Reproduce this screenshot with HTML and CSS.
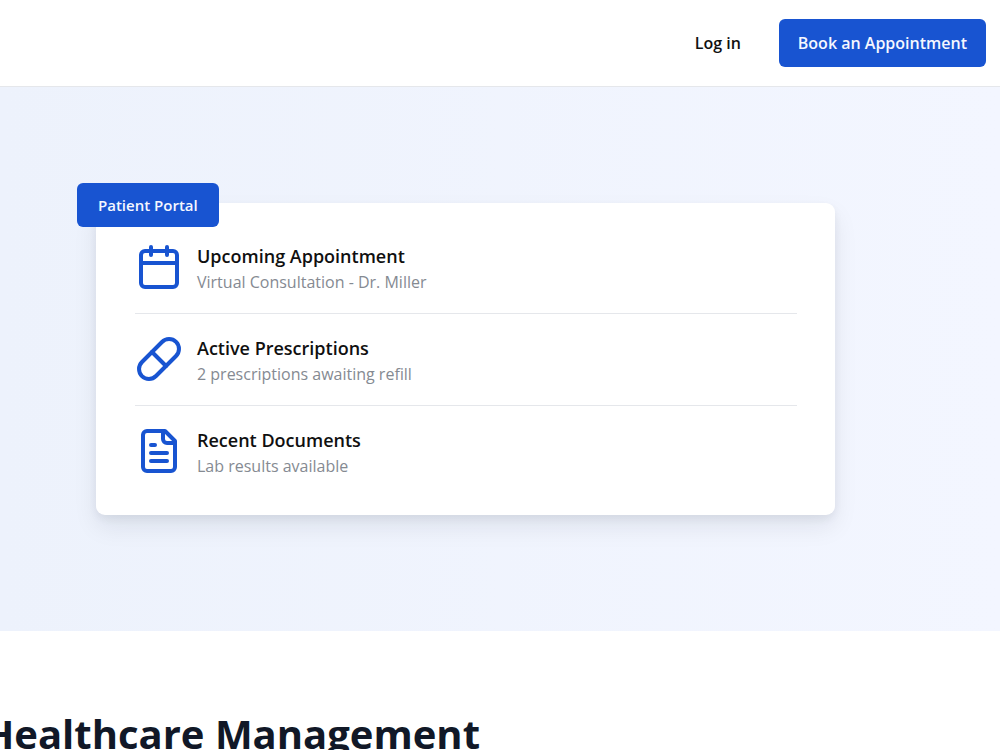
FILE: index.html
```html
<!DOCTYPE html>
<html lang="en">
<head>
<meta charset="utf-8">
<meta name="viewport" content="width=device-width, initial-scale=1">
<title>Patient Portal</title>
<link rel="stylesheet" href="styles.css">
</head>
<body>
<header class="header">
  <a class="login" href="#">Log in</a>
  <button class="book" type="button">Book an Appointment</button>
</header>
<main>
  <section class="hero">
    <div class="card">
      <span class="badge">Patient Portal</span>
      <ul class="list">
        <li class="item">
          <svg class="icon" viewBox="0 0 24 24" aria-hidden="true"><path d="M8 2v4M16 2v4M3 10h18"/><rect x="3" y="4" width="18" height="18" rx="2"/></svg>
          <div>
            <h3 class="title">Upcoming Appointment</h3>
            <p class="detail">Virtual Consultation - Dr. Miller</p>
          </div>
        </li>
        <li class="item">
          <svg class="icon" viewBox="0 0 24 24" aria-hidden="true"><path d="m10.5 20.5 10-10a4.95 4.95 0 1 0-7-7l-10 10a4.95 4.95 0 1 0 7 7Z"/><path d="m8.5 8.5 7 7"/></svg>
          <div>
            <h3 class="title">Active Prescriptions</h3>
            <p class="detail">2 prescriptions awaiting refill</p>
          </div>
        </li>
        <li class="item">
          <svg class="icon" viewBox="0 0 24 24" aria-hidden="true"><path d="M15 2H6a2 2 0 0 0-2 2v16a2 2 0 0 0 2 2h12a2 2 0 0 0 2-2V7Z"/><path d="M14 2v4a2 2 0 0 0 2 2h4M10 9H8M16 13H8M16 17H8"/></svg>
          <div>
            <h3 class="title">Recent Documents</h3>
            <p class="detail">Lab results available</p>
          </div>
        </li>
      </ul>
    </div>
  </section>
  <section class="features">
    <h2 class="heading">Healthcare Management</h2>
  </section>
</main>
</body>
</html>
```
FILE: styles.css
```css
* {
  box-sizing: border-box;
}

body {
  margin: 0;
  background: #fff;
  color: #101010;
  font-family: "Open Sans", "Noto Sans", sans-serif;
  font-size: 16px;
  line-height: 24px;
  overflow: hidden;
}

.header {
  display: flex;
  justify-content: flex-end;
  align-items: center;
  gap: 38px;
  padding: 19px 14px;
  border-bottom: 1px solid #e5e7eb;
}

.login {
  color: inherit;
  font-weight: 600;
  text-decoration: none;
}

.book {
  padding: 12px 19px;
  border: 0;
  border-radius: 6px;
  background: #1854d1;
  color: #f5f7ff;
  font: 600 16px/24px "Open Sans", "Noto Sans", sans-serif;
}

.hero {
  padding: 116px 165px 116px 96px;
  background: linear-gradient(90deg, #edf2fc, #f3f6ff);
}

.card {
  position: relative;
  padding: 39px 38px 37px 39px;
  border-radius: 9px;
  background: #fff;
  box-shadow: 0 12px 24px rgba(16, 24, 40, 0.08), 0 4px 8px rgba(16, 24, 40, 0.06);
}

.badge {
  position: absolute;
  top: -20px;
  left: -19px;
  padding: 10px 21px;
  border-radius: 6px;
  background: #1854d1;
  color: #f5f7ff;
  font-weight: 600;
  font-size: 15px;
}

.list {
  margin: 0;
  padding: 0;
  list-style: none;
}

.item {
  display: flex;
  align-items: flex-start;
  gap: 14px;
  padding: 20px 0 19px;
  border-bottom: 1px solid #e5e7eb;
}

.item:first-child {
  padding-top: 0;
}

.item:last-child {
  padding-bottom: 0;
  border-bottom: 0;
}

.icon {
  flex: none;
  width: 48px;
  height: 48px;
  margin-top: 1px;
  fill: none;
  stroke: #1854d1;
  stroke-width: 2;
  stroke-linecap: round;
  stroke-linejoin: round;
}

.title {
  margin: 0;
  font-weight: 600;
  font-size: 18px;
  line-height: 28px;
}

.detail {
  margin: 0;
  color: #858a92;
  font-size: 16px;
  line-height: 24px;
}

.features {
  display: flex;
  justify-content: flex-end;
  padding: 75px 52% 24px 0;
}

.heading {
  margin: 0;
  color: #111827;
  font-weight: 700;
  font-size: 40px;
  line-height: 56px;
  white-space: nowrap;
}
```
